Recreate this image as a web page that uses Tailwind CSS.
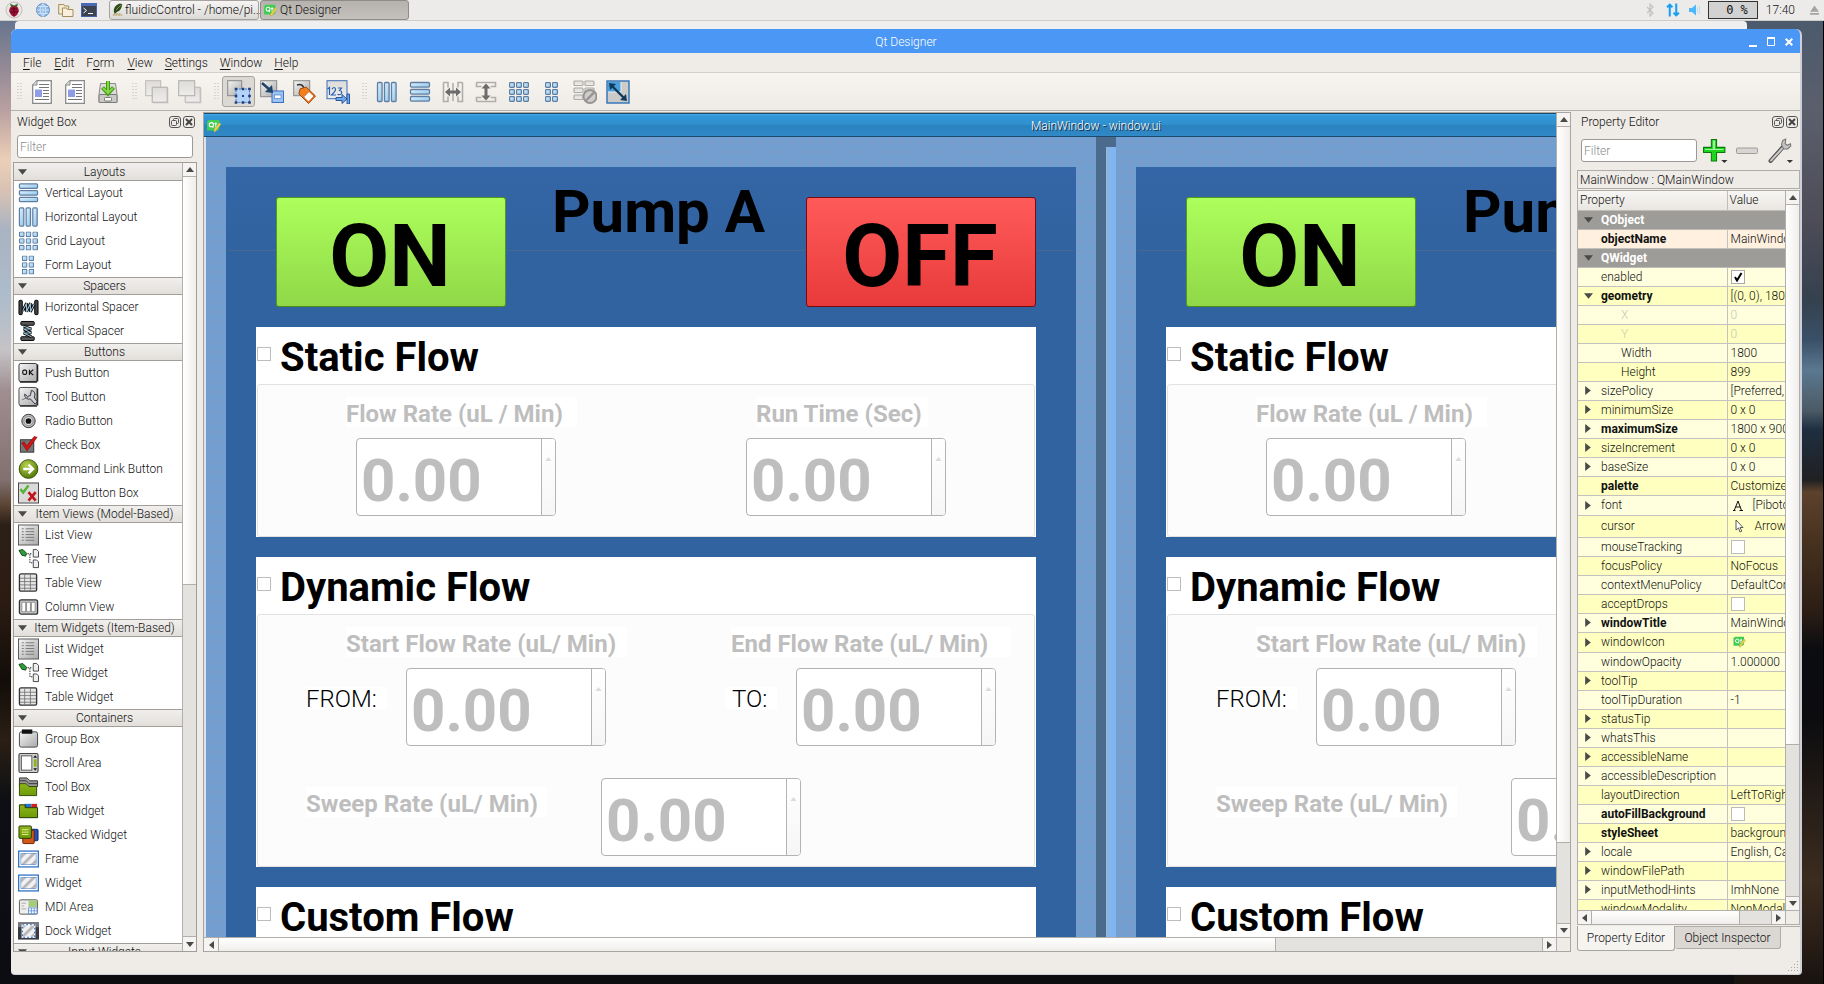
<!DOCTYPE html>
<html lang="en">
<head>
<meta charset="utf-8">
<title>Qt Designer</title>
<script src="https://cdn.jsdelivr.net/npm/@tailwindcss/browser@4"></script>
</head>
<body class="h-screen flex flex-col overflow-hidden relative bg-[#0d0d10] font-['Roboto',sans-serif] font-light text-[12px] leading-[16px] text-[#111]">

<!-- shared drawings -->
<svg class="absolute w-0 h-0" aria-hidden="true">
  <defs>
    <linearGradient id="gBlue" x1="0" y1="0" x2="1" y2="1"><stop offset="0" stop-color="#e4f4fd"/><stop offset="1" stop-color="#8cc4ea"/></linearGradient>
    <linearGradient id="gGray" x1="0" y1="0" x2="1" y2="1"><stop offset="0" stop-color="#f4f4f4"/><stop offset="1" stop-color="#a9a9a9"/></linearGradient>
    <linearGradient id="gLight" x1="0" y1="0" x2="0" y2="1"><stop offset="0" stop-color="#dedcd9"/><stop offset="1" stop-color="#efedeb"/></linearGradient>
    <linearGradient id="gGreen" x1="0" y1="0" x2="0" y2="1"><stop offset="0" stop-color="#8fb51a"/><stop offset="1" stop-color="#6c9a08"/></linearGradient>
    <radialGradient id="gBall" cx=".4" cy=".3" r=".7"><stop offset="0" stop-color="#b6d34a"/><stop offset="1" stop-color="#55790a"/></radialGradient>
    <pattern id="hatch" width="7" height="7" patternUnits="userSpaceOnUse" patternTransform="rotate(45)"><rect width="7" height="7" fill="#f1f1f1"/><rect width="3" height="7" fill="#b9b9b9"/></pattern>
  </defs>
  <symbol id="i-qt" viewBox="0 0 16 16"><path d="M2 1h12v10l-2 2H0V3z" fill="#41cd52"/><circle cx="5" cy="6.5" r="2.4" fill="none" stroke="#fff" stroke-width="1.3"/><path d="M5.5 8l2 2M10 4v5q0 1 1.5 1M8.5 5.5h3" stroke="#fff" stroke-width="1.2" fill="none"/><path d="M8 12l6-8 2 2-6 8-2 1z" fill="#ecd23c" stroke="#a89a70" stroke-width=".5"/></symbol>
  <symbol id="i-vl" viewBox="0 0 22 22"><g fill="url(#gBlue)" stroke="#5f7ea3" stroke-width="1.3"><rect x="1.5" y="1.5" width="19" height="4.6" rx="1"/><rect x="1.5" y="8.5" width="19" height="4.6" rx="1"/><rect x="1.5" y="15.5" width="19" height="4.6" rx="1"/></g></symbol>
  <symbol id="i-hl" viewBox="0 0 22 22"><g fill="url(#gBlue)" stroke="#5f7ea3" stroke-width="1.3"><rect x="1.5" y="1.5" width="4.6" height="19" rx="1"/><rect x="8.5" y="1.5" width="4.6" height="19" rx="1"/><rect x="15.5" y="1.5" width="4.6" height="19" rx="1"/></g></symbol>
  <symbol id="i-cell" viewBox="0 0 6 6"><rect x=".6" y=".6" width="4.8" height="4.8" rx=".8" fill="url(#gBlue)" stroke="#5f7ea3" stroke-width="1.2"/></symbol>
  <symbol id="i-grid" viewBox="0 0 22 22"><use href="#i-cell" x="1" y="1" width="6" height="6"/><use href="#i-cell" x="8" y="1" width="6" height="6"/><use href="#i-cell" x="15" y="1" width="6" height="6"/><use href="#i-cell" x="1" y="8" width="6" height="6"/><use href="#i-cell" x="8" y="8" width="6" height="6"/><use href="#i-cell" x="15" y="8" width="6" height="6"/><use href="#i-cell" x="1" y="15" width="6" height="6"/><use href="#i-cell" x="8" y="15" width="6" height="6"/><use href="#i-cell" x="15" y="15" width="6" height="6"/></symbol>
  <symbol id="i-form" viewBox="0 0 22 22"><use href="#i-cell" x="4" y="1" width="6" height="6"/><use href="#i-cell" x="11" y="1" width="6" height="6"/><use href="#i-cell" x="4" y="8" width="6" height="6"/><use href="#i-cell" x="11" y="8" width="6" height="6"/><use href="#i-cell" x="4" y="15" width="6" height="6"/><use href="#i-cell" x="11" y="15" width="6" height="6"/></symbol>
  <symbol id="i-hsp" viewBox="0 0 22 22"><rect x="1" y="4" width="3.5" height="15" rx="1" fill="#444" stroke="#000"/><rect x="17.500" y="4" width="3.5" height="15" rx="1" fill="#444" stroke="#000"/><path d="M5 15l4-8v9l4-9v9l4-8" stroke="#000" stroke-width="3" fill="none"/><path d="M5 15l4-8v9l4-9v9l4-8" stroke="#9cc0d4" stroke-width="1.2" fill="none"/></symbol>
  <symbol id="i-vsp" viewBox="0 0 22 22"><rect x="3" y="1" width="14" height="4" rx="1" fill="#555" stroke="#000"/><rect x="3" y="17" width="14" height="4" rx="1" fill="#555" stroke="#000"/><path d="M6 6l8 3H6l8 4H6l8 4" stroke="#000" stroke-width="3" fill="none"/><path d="M6 6l8 3H6l8 4H6l8 4" stroke="#9cc0d4" stroke-width="1.1" fill="none"/></symbol>
  <symbol id="i-push" viewBox="0 0 22 22"><rect x="1" y="1" width="19" height="19" rx="2" fill="url(#gGray)" stroke="#333"/><path d="M2 20.500h18M20.500 2v18" stroke="#222" stroke-width="1.5"/><rect x="5" y="8" width="4" height="4.500" rx="1.500" fill="none" stroke="#111" stroke-width="1.200"/><path d="M12 7.500v5.500M16 7.500l-3.500 3 3.500 2.500" fill="none" stroke="#111" stroke-width="1.200"/></symbol>
  <symbol id="i-tool" viewBox="0 0 22 22"><rect x="1" y="1" width="19" height="19" rx="2" fill="url(#gGray)" stroke="#444"/><path d="M2 20.500h18M20.500 2v18" stroke="#333" stroke-width="1.500"/><path d="M14 4a4.500 4.500 0 0 1 3 7l3 5-2 2.500-5-5.500a4.500 4.500 0 0 1-6-5l3 2.500 3-1z" fill="#cfd4da" stroke="#333" stroke-width="1"/><path d="M4 14l7-3" stroke="#777"/></symbol>
  <symbol id="i-radio" viewBox="0 0 22 22"><circle cx="11" cy="11" r="7" fill="#bbb" stroke="#333"/><circle cx="11" cy="11" r="4.800" fill="#ddd" stroke="#888"/><circle cx="11" cy="11" r="3" fill="#111"/></symbol>
  <symbol id="i-check" viewBox="0 0 22 22"><rect x="2.500" y="5.500" width="14" height="13" fill="#777" stroke="#333"/><path d="M4 9l2.500-1.500L9 12 17 2l3 1L9.500 17z" fill="#d41515" stroke="#700" stroke-width=".6"/></symbol>
  <symbol id="i-cmd" viewBox="0 0 22 22"><circle cx="11" cy="11" r="9.800" fill="url(#gBall)" stroke="#3c5206"/><path d="M5.500 11h9M11 6.500l4.800 4.500-4.800 4.500" fill="none" stroke="#fff" stroke-width="2.400"/></symbol>
  <symbol id="i-dlg" viewBox="0 0 22 22"><rect x=".5" y=".5" width="21" height="21" fill="#dadada" stroke="#444"/><path d="M2.500 7l3 3.500L11 3" fill="none" stroke="#54b333" stroke-width="2.600"/><path d="M11 10l7.500 9M18.500 10L11 19" stroke="#c0171c" stroke-width="2.800"/></symbol>
  <symbol id="i-list" viewBox="0 0 22 22"><rect x=".5" y=".5" width="21" height="21" fill="url(#gGray)" stroke="#555"/><path d="M4 4.500h2M4 7.500h2M4 10.500h2M4 13.500h2M4 16.500h2M8 4.500h9M8 7.500h9M8 10.500h9M8 13.500h9M8 16.500h9" stroke="#777"/></symbol>
  <symbol id="i-tree" viewBox="0 0 22 22"><path d="M1 2l4-1 4 4-1 3-4-1z" fill="#2f9a3a" stroke="#124a18"/><path d="M10 5.500h5M12.500 6v9h3" fill="none" stroke="#222" stroke-dasharray="1.500 1"/><path d="M16 1h3.500l2 2v6H16zM16 12h3.500l2 2v6H16z" fill="#eee" stroke="#444"/></symbol>
  <symbol id="i-table" viewBox="0 0 22 22"><rect x="1.500" y="1.500" width="18" height="18" rx="1.500" fill="#e6e6e6" stroke="#333" stroke-width="1.400"/><path d="M2 6h17M2 9.500h17M2 13h17M2 16.500h17M7 2v17M13 2v17" stroke="#666" stroke-width=".8"/></symbol>
  <symbol id="i-col" viewBox="0 0 22 22"><rect x="1.500" y="3.500" width="19" height="15" rx="2" fill="#ccc" stroke="#333" stroke-width="1.400"/><path d="M4 6h4v10H4zM9 6h4v10H9zM14 6h4v10h-4z" fill="#fff" stroke="#777" stroke-width=".8"/></symbol>
  <symbol id="i-group" viewBox="0 0 22 22"><rect x="1.500" y="3.500" width="19" height="16" rx="2" fill="url(#gGray)" stroke="#444"/><rect x="4" y="1" width="11" height="4.500" fill="#111"/></symbol>
  <symbol id="i-scroll" viewBox="0 0 22 22"><rect x="1" y="1" width="20" height="20" rx="1.500" fill="#d0d0d0" stroke="#444" stroke-width="1.200"/><rect x="3.500" y="3.500" width="11" height="15" fill="#fff" stroke="#555"/><rect x="16.500" y="7" width="3" height="8" fill="#8db51a"/><path d="M16 5.500l2-2.500 2 2.500zM16 16.500l2 2.500 2-2.500z" fill="#111"/></symbol>
  <symbol id="i-toolbox" viewBox="0 0 22 22"><path d="M1.500 1.500h8l3 3h8v6h-19z" fill="#999" stroke="#333"/><path d="M1.500 4.500h7l3 3h9" fill="none" stroke="#333"/><path d="M1.500 7.500h7l3 3h8v9.500h-18z" fill="url(#gGreen)" stroke="#33480a"/></symbol>
  <symbol id="i-tab" viewBox="0 0 22 22"><rect x="7" y="3.500" width="7" height="4" fill="#1d73d0"/><rect x="14" y="3.500" width="6" height="4" fill="#d02020"/><path d="M1.500 4.500h6v3h13v10.500h-19z" fill="url(#gGreen)" stroke="#222f05"/></symbol>
  <symbol id="i-stack" viewBox="0 0 22 22"><rect x="9" y="5" width="12" height="12" rx="1" fill="#2152b8" stroke="#102a66"/><rect x="5" y="6" width="12" height="14" rx="1" fill="#d0561a" stroke="#662505"/><rect x="1" y="1.500" width="13" height="13" rx="1" fill="url(#gGreen)" stroke="#26380a"/><path d="M4 5.500h7M4 8h7M4 10.500h7" stroke="#e6f08a"/></symbol>
  <symbol id="i-frame" viewBox="0 0 22 22"><rect x=".7" y="2.700" width="20.600" height="16.600" fill="#fff" stroke="#2a6cc4" stroke-width="1.300"/><rect x="3" y="5" width="16" height="12" fill="url(#hatch)" stroke="#2a6cc4" stroke-width=".5"/></symbol>
  <symbol id="i-mdi" viewBox="0 0 22 22"><rect x="1.500" y="3.500" width="19" height="15" rx="1.500" fill="#eee" stroke="#555"/><rect x="11" y="4" width="9" height="7" fill="#a5cc7c"/><rect x="11" y="12" width="9" height="6" fill="#fff" stroke="#6b97d8"/><path d="M11 15h9M14 12v6M17 12v6" stroke="#6b97d8"/><path d="M3.500 7h5M3.500 10h3M3.500 13h5" stroke="#aaa"/></symbol>
  <symbol id="i-dock" viewBox="0 0 22 22"><rect y="2" width="22" height="18" fill="#3a3a40"/><rect y="2" width="22" height="5" fill="#77777d"/><rect x="4.500" y="4.500" width="13" height="13" fill="url(#hatch)" stroke="#fff" stroke-width="1.500"/><rect x="4.500" y="4.500" width="13" height="13" fill="none" stroke="#2a6cc4" stroke-width="1.200" stroke-dasharray="2 2"/></symbol>
  <symbol id="i-float" viewBox="0 0 12 12"><rect x=".5" y=".5" width="11" height="11" rx="2.500" fill="none" stroke="#555"/><rect x="4.500" y="2.500" width="5" height="5" rx="1" fill="none" stroke="#555"/><rect x="2.500" y="4.500" width="5" height="5" rx="1" fill="#efebe7" stroke="#555"/></symbol>
  <symbol id="i-close" viewBox="0 0 12 12"><rect x=".5" y=".5" width="11" height="11" rx="2.500" fill="none" stroke="#555"/><path d="M3 3l6 6M9 3l-6 6" stroke="#444" stroke-width="2"/></symbol>
  <symbol id="i-doc" viewBox="0 0 24 24"><path d="M7 .7h14.300v22.600H2.700V5z" fill="#fff" stroke="#8a8a8a" stroke-width="1.300"/><path d="M7 .7V5H2.700" fill="#ddd" stroke="#8a8a8a"/><path d="M9 4.500h10M9 7.500h10M13 10.500h6M13 13.500h6M13 16.500h6M5 19.500h14" stroke="#777"/><rect x="5" y="9.500" width="7" height="7.500" fill="#8f9ce8"/></symbol>
  <symbol id="i-save" viewBox="0 0 24 24"><path d="M4.500 3.500h15l1.500 11v8H3v-8z" fill="#dcdcda" stroke="#8a8a88"/><rect x="3" y="14.500" width="18" height="8" rx="1" fill="#c9c9c7" stroke="#7a7a78"/><rect x="8.500" y="17.500" width="7" height="3.500" rx="1" fill="#fff" stroke="#777"/><path d="M12 1v11M6.500 7.500l5.500 6 5.500-6" fill="none" stroke="#3f9a10" stroke-width="4"/><path d="M12 1v11M7 8l5 5 5-5" fill="none" stroke="#86d44a" stroke-width="2"/></symbol>
  <symbol id="i-back" viewBox="0 0 24 24"><rect x="8" y="8" width="15.500" height="15.500" fill="#bbb" opacity=".5"/><rect x=".7" y=".7" width="15" height="15" fill="url(#gLight)" stroke="#bdbab6"/><rect x="7.200" y="7.200" width="15" height="15" fill="url(#gLight)" stroke="#b0ada9"/></symbol>
  <symbol id="i-front" viewBox="0 0 24 24"><rect x="8" y="8" width="15.500" height="15.500" fill="#bbb" opacity=".5"/><rect x="7.200" y="7.200" width="15" height="15" fill="url(#gLight)" stroke="#b9b6b2"/><rect x=".7" y=".7" width="16" height="15" fill="url(#gLight)" stroke="#b0ada9"/></symbol>
  <symbol id="i-ew" viewBox="0 0 24 24"><rect x=".7" y=".7" width="14" height="15" fill="url(#gGray)" stroke="#888"/><rect x="9" y="9" width="13.500" height="13.500" fill="#b4d3fa" stroke="#4a78c8" stroke-dasharray="2 1"/><path d="M7.700 7.700h2.600v2.600H7.700zM14.700 7.700h2.600v2.600h-2.600zM21.200 7.700h2.600v2.600h-2.600zM7.700 14.700h2.600v2.600H7.700zM21.200 14.700h2.600v2.600h-2.600zM7.700 21.200h2.600v2.600H7.700zM14.700 21.200h2.600v2.600h-2.600zM21.200 21.200h2.600v2.600h-2.600z" fill="#1f3f78"/><rect x="15" y="15" width="2" height="2" fill="#1f3f78"/></symbol>
  <symbol id="i-sig" viewBox="0 0 24 24"><rect x=".7" y=".7" width="16" height="16" fill="url(#gGray)" stroke="#888"/><rect x="12" y="11" width="11.500" height="11.500" fill="#9cc3f5" stroke="#3b70be"/><rect x="14.500" y="15" width="6.500" height="3.500" fill="#fff" stroke="#3b70be" stroke-width=".6"/><path d="M2 3l8 7" stroke="#1c4368" stroke-width="2.500"/><path d="M13 13l-8-1 7-7z" fill="#1c4368"/></symbol>
  <symbol id="i-bud" viewBox="0 0 24 24"><rect x=".7" y=".7" width="16" height="15" fill="url(#gGray)" stroke="#888"/><path d="M4 5q6-2 7 4" fill="none" stroke="#333" stroke-width="1.500"/><path d="M7 9l6-2 9.500 9-7 7.500L6 14z" fill="#f08020" stroke="#a04a08"/><path d="M16 11.500l5 4.500-5.500 6-5-5z" fill="#fff" stroke="#e06010"/></symbol>
  <symbol id="i-taborder" viewBox="0 0 24 24"><rect x="1" y=".7" width="20" height="18" fill="url(#gLight)" stroke="#3b6db5"/><path d="M1.500 9l2-1.500V15M6 9q2.500-3 3.500 0 .3 2-4 6h4.500M12 8h3.500l-2 2.500q3 .5 2 3-1.500 2-4 .8" fill="none" stroke="#2a62b0" stroke-width="1.200"/><path d="M10 17.500h6v-3l5 4.500-5 4.500v-3h-6zM21 14h2.500v10H21z" fill="#6fa8e8" stroke="#1d4a96" stroke-width=".9"/></symbol>
  <symbol id="i-hsplit" viewBox="0 0 22 22"><path d="M1.500 1.500H6v5M1.500 1.500v19H6v-5M20.500 1.500H16v5M20.500 1.500v19H16v-5M11 2v18" fill="none" stroke="#b0aeab" stroke-width="1.600"/><path d="M3 11l5-4.500V9.500h6V6.500l5 4.500-5 4.500v-3H8v3z" fill="#6c6c6c"/></symbol>
  <symbol id="i-vsplit" viewBox="0 0 22 22"><path d="M1.500 1.500v4h5M1.500 1.500h19v4h-5M1.500 20.500v-4h5M1.500 20.500h19v-4h-5" fill="none" stroke="#b0aeab" stroke-width="1.600"/><path d="M11 2.500l4.500 5h-3v7h3L11 19.500l-4.500-5h3v-7h-3z" fill="#6c6c6c"/></symbol>
  <symbol id="i-break" viewBox="0 0 24 24"><g fill="url(#gLight)" stroke="#aeaba8" stroke-width="1.200"><rect x="1" y="1" width="9" height="4.500" rx="1"/><rect x="12" y="1" width="9" height="4.500" rx="1"/><rect x="1" y="8" width="9" height="4.500" rx="1"/><rect x="1" y="15" width="9" height="4.500" rx="1"/><rect x="12" y="8" width="9" height="4.500" rx="1"/></g><circle cx="17" cy="16.500" r="6.500" fill="#cfcdcb" stroke="#969492" stroke-width="2"/><path d="M12.500 21l9-9" stroke="#969492" stroke-width="2.400"/></symbol>
  <symbol id="i-adjust" viewBox="0 0 24 24"><rect x="1" y="1" width="22" height="22" fill="#cdcbc8" stroke="#2d6fb8" stroke-width="1.400"/><path d="M2 2h13v10H2z" fill="#4aa0dc"/><path d="M15 2v10H2" stroke="#eee" fill="none"/><path d="M6 6l12 12" stroke="#123a5c" stroke-width="2.400"/><path d="M3 3l7 1-6 6zM21 21l-7-1 6-6z" fill="#123a5c"/></symbol>
  <symbol id="i-up" viewBox="0 0 8 5"><path d="M0 5l4-5 4 5z" fill="#4a4a48"/></symbol>
  <symbol id="i-down" viewBox="0 0 8 5"><path d="M0 0l4 5 4-5z" fill="#4a4a48"/></symbol>
  <symbol id="i-left" viewBox="0 0 5 8"><path d="M5 0L0 4l5 4z" fill="#4a4a48"/></symbol>
  <symbol id="i-right" viewBox="0 0 5 8"><path d="M0 0l5 4-5 4z" fill="#4a4a48"/></symbol>
</svg>

<!-- desktop picture, seen at the window's edges -->
<div class="absolute inset-0 -z-10 flex justify-between" aria-hidden="true">
  <div class="w-[40px] bg-[linear-gradient(to_bottom,#65748e_20px,#8c8694_60px,#b9a0a0_110px,#eccfb8_160px,#d9c2b4_190px,#a9b3c2_230px,#aebccb_300px,#c5c3c6_350px,#a08f92_390px,#80706f_480px,#5a4434_505px,#2c1f16_525px,#2b1c12_600px,#120d0a_680px,#2b1f14_740px,#0d0f14_800px,#0c0d12_984px)]"></div>
  <div class="w-[90px] border-r border-black bg-[linear-gradient(to_bottom,#4b5a6c_20px,#5b5f6c_110px,#4d4c58_220px,#35414e_300px,#3a5068_340px,#5a7890_370px,#4c5b66_410px,#1e2e40_430px,#202022_480px,#5d422d_492px,#47321f_540px,#2c1e15_610px,#0b0c10_650px,#0c0c0f_720px,#2a2018_820px,#3c2c20_880px,#2a1e16_940px,#17120f_984px)]"></div>
</div>

<!-- system panel -->
<header class="h-[21px] shrink-0 flex items-center bg-[#edebe9] border-b border-[#cfcdc9] whitespace-nowrap">
  <svg class="ml-[5px] w-[18px] h-[18px]" viewBox="0 0 18 18"><circle cx="9" cy="9" r="8" fill="#e9e7e5" stroke="#c4c0bc"/><path d="M5 2.500l4 2 4-2-1 3.500H6z" fill="#3e6b2c"/><path d="M5 6.500l4-1.500 4 1.500 1 3.500-2 4-3 2-3-2-2-4z" fill="#a01238"/><path d="M6 8h6M5 11h8M9 6v9" stroke="#4a0618" stroke-width=".8"/></svg>
  <svg class="ml-[13px] w-[14px] h-[14px]" viewBox="0 0 14 14"><circle cx="7" cy="7" r="6.500" fill="#8fb9e6" stroke="#5f8ec4"/><path d="M7 .5v13M.5 7h13M2 3.500h10M2 10.500h10M7 .5q-6 6.500 0 13 6-6.500 0-13" fill="none" stroke="#d8e8f8" stroke-width=".8"/></svg>
  <svg class="ml-[8px] w-[16px] h-[16px]" viewBox="0 0 16 16"><path d="M.7 2.500h5l1 1.500h4v8h-10z" fill="#f3ead2" stroke="#a58e5c"/><path d="M4.500 6h4l1 1.500h5.500v7h-10.500z" fill="#f8f0dc" stroke="#a58e5c"/></svg>
  <svg class="ml-[7px] w-[16px] h-[14px]" viewBox="0 0 16 14"><rect x=".5" y=".5" width="15" height="13" fill="#3c4350" stroke="#4664a8"/><rect width="16" height="3" fill="#4a6ab8"/><path d="M2.500 5l3 2.500-3 2.500" fill="none" stroke="#fff"/><path d="M7 10.500h5" stroke="#fff"/></svg>
  <nav class="flex ml-[12px] gap-px" aria-label="Open windows">
    <button class="h-[20px] w-[150px] px-[2px] flex items-center gap-px rounded-[3px] border border-[#a5a29e] bg-linear-to-b from-[#f6f5f3] to-[#dcdad7]"><svg class="w-[12px] h-[16px] shrink-0" viewBox="0 0 14 16"><path d="M2 9q0-6 7-8.500l3 .5q-1 8-6 9l-3 3z" fill="#2c4a1a"/><path d="M5 8q3-4 6-6" stroke="#8fa860" fill="none"/><path d="M1 14h11M2 12.500h9" stroke="#b9a66c" stroke-width="1.400" stroke-dasharray="2 1"/></svg><span>fluidicControl - /home/pi...</span></button>
    <button class="h-[20px] w-[149px] px-[3px] flex items-center gap-[3px] rounded-[3px] border border-[#8f8c88] bg-linear-to-b from-[#b5b2ae] to-[#c4c1bd]"><svg class="w-[13px] h-[13px] shrink-0"><use href="#i-qt"/></svg><span>Qt Designer</span></button>
  </nav>
  <div class="ml-auto flex items-center pr-[5px]">
    <svg class="w-[8px] h-[14px]" viewBox="0 0 8 14"><path d="M1 4l6 6-3 3V1l3 3-6 6" fill="none" stroke="#c2c2c4" stroke-width="1.200"/></svg>
    <svg class="ml-[12px] w-[14px] h-[14px]" viewBox="0 0 12 13"><path d="M3 12.500V2M.5 4L3 1.500 5.500 4M9 .5V11M6.500 9L9 11.500 11.500 9" fill="none" stroke="#17a0f4" stroke-width="1.900"/></svg>
    <svg class="ml-[9px] w-[12px] h-[12px]" viewBox="0 0 12 12"><path d="M0 4h3l4-3.500v11L3 8H0z" fill="#4cb8fa"/><path d="M8.500 3.500v5M10.500 2v8" stroke="#b8dcf2"/></svg>
    <div class="ml-[7px] w-[50px] h-[18px] border border-[#333] bg-[#d2d2d2] pr-[9px] text-right leading-[17px] font-normal whitespace-pre font-['DejaVu_Sans_Mono',monospace]">0 %</div>
    <time class="ml-[8px]">17:40</time>
    <svg class="ml-[15px] w-[9px] h-[10px]" viewBox="0 0 8 9"><path d="M0 6l4-5.500L8 6zM0 7.200h8v1.600H0z" fill="#a4a4a4"/></svg>
  </div>
</header>

<!-- window lying behind -->
<div class="absolute left-[15px] right-[77px] top-[21px] h-[20px] rounded-t-[4px] bg-[#efefef]"></div>

<!-- Qt Designer window -->
<div class="relative z-10 flex-1 min-h-0 mt-[8px] mb-[9px] ml-[11px] mr-[22px] flex flex-col rounded-t-[6px] rounded-b-[4px] overflow-hidden bg-[#efebe7] border-r-2 border-b border-[#cdd0d8]">
  <div class="h-[24px] shrink-0 bg-[#4b97f5] flex items-center pt-px text-white -mr-[2px] pr-[4px]">
    <h1 class="flex-1 text-center pl-[3px]">Qt Designer</h1>
    <button aria-label="Minimize" class="w-[18px] h-[16px] -ml-[54px]"><svg class="w-[8px] h-[8px] mx-auto mt-[2px]" viewBox="0 0 8 8"><path d="M0 7h8" stroke="#fff" stroke-width="2"/></svg></button>
    <button aria-label="Maximize" class="w-[18px] h-[16px]"><svg class="w-[8px] h-[9px] mx-auto" viewBox="0 0 8 9"><path d="M.5 1h7v7.500h-7z" fill="none" stroke="#fff"/><path d="M0 1h8" stroke="#fff" stroke-width="2"/></svg></button>
    <button aria-label="Close" class="w-[18px] h-[16px]"><svg class="w-[8px] h-[8px] mx-auto" viewBox="0 0 8 8"><path d="M.7.7l6.600 6.600M7.300.7L.7 7.300" stroke="#fff" stroke-width="2"/></svg></button>
  </div>

  <nav class="h-[20px] shrink-0 flex items-center pl-[6px] border-b border-[#d3cfca]" aria-label="Menu bar">
    <button class="px-[6px]"><u class="underline-offset-2">F</u>ile</button>
    <button class="px-[6px] ml-px"><u class="underline-offset-2">E</u>dit</button>
    <button class="px-[6px]">F<u class="underline-offset-2">o</u>rm</button>
    <button class="px-[6px] ml-px"><u class="underline-offset-2">V</u>iew</button>
    <button class="px-[6px]"><u class="underline-offset-2">S</u>ettings</button>
    <button class="px-[6px]"><u class="underline-offset-2">W</u>indow</button>
    <button class="px-[6px]"><u class="underline-offset-2">H</u>elp</button>
  </nav>

  <div id="toolbar" role="toolbar" aria-label="Tools" class="h-[38px] shrink-0 flex items-center pl-[6px] border-b border-[#b5b1ac] bg-linear-to-b from-[#f8f5f1] to-[#eeeae6]"></div>

  <div class="flex-1 min-h-0 flex pl-px">
    <!-- widget box -->
    <section class="w-[191px] shrink-0 flex flex-col pb-[22px] pr-[6px]">
      <div class="h-[21px] flex items-center pl-[5px] pr-[2px] gap-[2px]">
        <h2 class="mr-auto">Widget Box</h2>
        <button aria-label="Float widget box"><svg class="w-[12px] h-[12px] block"><use href="#i-float"/></svg></button>
        <button aria-label="Close widget box"><svg class="w-[12px] h-[12px] block"><use href="#i-close"/></svg></button>
      </div>
      <input aria-label="Filter widgets" placeholder="Filter" class="mt-[3px] ml-[5px] mr-[4px] h-[23px] shrink-0 rounded-[3px] border border-[#9d9a96] bg-white px-[2px] placeholder:text-[#8c8c8c]">
      <div class="mt-[4px] ml-[1px] flex-1 min-h-0 flex border border-[#a19e9a] bg-white">
        <div id="widgets" class="flex-1 min-w-0 overflow-hidden"></div>
        <div class="w-[14px] shrink-0 flex flex-col border-l border-[#b2afab] bg-[#e4e2df]">
          <button aria-label="Scroll up" class="h-[14px] shrink-0 grid place-items-center bg-[#f6f4f2] border-b border-[#b2afab]"><svg class="w-[8px] h-[5px]"><use href="#i-up"/></svg></button>
          <div class="grow-[408] basis-0 bg-linear-to-r from-white to-[#f0eeeb] border-b border-[#b2afab]"></div>
          <div class="grow-[352] basis-0"></div>
          <button aria-label="Scroll down" class="h-[15px] shrink-0 grid place-items-center bg-[#f6f4f2] border-t border-[#b2afab]"><svg class="w-[8px] h-[5px]"><use href="#i-down"/></svg></button>
        </div>
      </div>
    </section>

    <!-- form canvas -->
    <main class="flex-1 min-w-0 flex flex-col mt-px mb-[22px] border border-[#a9a6a2] bg-[#efebe7]">
      <div class="flex-1 min-h-0 flex">
        <div class="flex-1 min-w-0 overflow-hidden flex flex-col">
          <div class="w-[1784px] h-[24px] shrink-0 flex items-center pt-px pl-[3px] border-t border-b border-[#1b4a6c] bg-[linear-gradient(to_bottom,#46a8e6,#3196d8_10%,#2f8fcc_48%,#2a82bf_52%,#3089c6)] text-white">
            <svg class="w-[14px] h-[14px]"><use href="#i-qt"/></svg>
            <h2 class="flex-1 text-center pr-[17px] [text-shadow:1px_1px_0_#123]">MainWindow - window.ui</h2>
          </div>
          <div class="flex-1 min-h-0 flex items-start w-[1784px] border-l-2 border-[#dfe3e8] bg-[#739ed0] bg-[radial-gradient(circle,#8d98b8_1px,transparent_1px)] bg-size-[10px_10px]" id="canvas"></div>
        </div>
        <div class="w-[14px] shrink-0 flex flex-col border-l border-[#b2afab] bg-[#e4e2df]">
          <button aria-label="Scroll form up" class="h-[14px] shrink-0 grid place-items-center bg-[#f6f4f2] border-b border-[#b2afab]"><svg class="w-[8px] h-[5px]"><use href="#i-up"/></svg></button>
          <div class="grow-[717] basis-0 bg-linear-to-r from-white to-[#f0eeeb] border-b border-[#b2afab]"></div>
          <div class="grow-[80] basis-0"></div>
          <button aria-label="Scroll form down" class="h-[14px] shrink-0 grid place-items-center bg-[#f6f4f2] border-t border-[#b2afab]"><svg class="w-[8px] h-[5px]"><use href="#i-down"/></svg></button>
        </div>
      </div>
      <div class="h-[14px] shrink-0 flex border-t border-[#b2afab] bg-[#e4e2df]">
        <button aria-label="Scroll form left" class="w-[15px] grid place-items-center bg-[#f6f4f2] border-r border-[#b2afab]"><svg class="w-[5px] h-[8px]"><use href="#i-left"/></svg></button>
        <div class="grow-[1058] basis-0 bg-linear-to-b from-white to-[#f0eeeb] border-r border-[#b2afab]"></div>
        <div class="grow-[266] basis-0"></div>
        <button aria-label="Scroll form right" class="w-[14px] grid place-items-center bg-[#f6f4f2] border-l border-[#b2afab]"><svg class="w-[5px] h-[8px]"><use href="#i-right"/></svg></button>
        <div class="w-[14px] bg-[#efebe7] border-l border-[#b2afab]"></div>
      </div>
    </main>

    <!-- property editor -->
    <section class="w-[229px] shrink-0 flex flex-col pl-[6px]">
      <div class="h-[21px] flex items-center pl-[4px] pr-[2px] gap-[2px]">
        <h2 class="mr-auto">Property Editor</h2>
        <button aria-label="Float property editor"><svg class="w-[12px] h-[12px] block"><use href="#i-float"/></svg></button>
        <button aria-label="Close property editor"><svg class="w-[12px] h-[12px] block"><use href="#i-close"/></svg></button>
      </div>
      <div class="mt-[7px] pl-[4px] flex items-center h-[23px]">
        <input aria-label="Filter properties" placeholder="Filter" class="w-[116px] h-[23px] rounded-[3px] border border-[#9d9a96] bg-white px-[2px] placeholder:text-[#8c8c8c]">
        <button aria-label="Add property" class="ml-[5px]"><svg class="w-[26px] h-[25px] block" viewBox="0 0 24 24"><path d="M8.500 1.500h5v7.500h8v5h-8v8h-5v-8H1V9h7.500z" fill="#1fd41f" stroke="#0a7a0a"/><path d="M10 2.500h2v8h8v1H2.500v-1H10z" fill="#9cf59c"/><path d="M18 21h6l-3 3z" fill="#333"/></svg></button>
        <button aria-label="Remove property" class="ml-[8px]"><svg class="w-[22px] h-[8px] block" viewBox="0 0 22 8"><rect x=".5" y="1" width="21" height="5.500" rx="1" fill="#d7d5d3" stroke="#9f9c99"/></svg></button>
        <button aria-label="Configure" class="ml-[10px]"><svg class="w-[25px] h-[25px] block" viewBox="0 0 24 24"><path d="M2.500 22L14 9" stroke="#555" stroke-width="4" stroke-linecap="round"/><path d="M3 21.500L14 9.500" stroke="#c9c9c9" stroke-width="2" stroke-linecap="round"/><path d="M17 1l-3 1.500-1 4 2 4h4l3-3-.5-2-3 1.500-2-1.500z" fill="#c4c4c4" stroke="#777"/><path d="M18 21h6l-3 3z" fill="#333"/></svg></button>
      </div>
      <div class="mt-[8px] h-[19px] shrink-0 border border-[#b0ada9] px-[2px] leading-[18px]">MainWindow : QMainWindow</div>
      <div class="mt-px h-[735px] min-h-0 flex flex-col border border-[#b0ada9]">
        <div class="flex-1 min-h-0 flex">
          <div class="flex-1 min-w-0 overflow-hidden bg-white">
            <table class="w-full table-fixed border-collapse whitespace-nowrap">
              <colgroup><col class="w-[149px]"><col></colgroup>
              <thead><tr class="h-[19px] bg-linear-to-b from-[#f8f6f4] to-[#e9e6e2] text-left"><th class="font-light pl-[2px] border-r border-b border-[#c0bdb9]">Property</th><th class="font-light pl-[2px] border-b border-[#c0bdb9]">Value</th></tr></thead>
              <tbody id="props"></tbody>
            </table>
          </div>
          <div class="w-[14px] shrink-0 flex flex-col border-l border-[#b2afab] bg-[#e4e2df]">
            <button aria-label="Scroll properties up" class="h-[14px] shrink-0 grid place-items-center bg-[#f6f4f2] border-b border-[#b2afab]"><svg class="w-[8px] h-[5px]"><use href="#i-up"/></svg></button>
            <div class="grow-[541] basis-0 bg-linear-to-r from-white to-[#f0eeeb] border-b border-[#b2afab]"></div>
            <div class="grow-[151] basis-0"></div>
            <button aria-label="Scroll properties down" class="h-[14px] shrink-0 grid place-items-center bg-[#f6f4f2] border-t border-[#b2afab]"><svg class="w-[8px] h-[5px]"><use href="#i-down"/></svg></button>
          </div>
        </div>
        <div class="h-[14px] shrink-0 flex border-t border-[#b2afab] bg-[#e4e2df]">
          <button aria-label="Scroll properties left" class="w-[14px] grid place-items-center bg-[#f6f4f2] border-r border-[#b2afab]"><svg class="w-[5px] h-[8px]"><use href="#i-left"/></svg></button>
          <div class="grow-[149] basis-0 bg-linear-to-b from-white to-[#f0eeeb] border-r border-[#b2afab]"></div>
          <div class="grow-[31] basis-0"></div>
          <button aria-label="Scroll properties right" class="w-[14px] grid place-items-center bg-[#f6f4f2] border-l border-[#b2afab]"><svg class="w-[5px] h-[8px]"><use href="#i-right"/></svg></button>
          <div class="w-[14px] bg-[#efebe7] border-l border-[#b2afab]"></div>
        </div>
      </div>
      <div role="tablist" class="mt-px flex items-start border-t border-[#b0ada9]">
        <button role="tab" aria-selected="true" class="w-[98px] h-[25px] -mt-px rounded-b-[3px] border border-t-0 border-[#a9a6a2] bg-[#f6f4f1]">Property Editor</button>
        <button role="tab" aria-selected="false" class="w-[106px] h-[22px] rounded-b-[3px] border border-l-0 border-t-0 border-[#b0ada9] bg-[#dbd7d2]">Object Inspector</button>
      </div>
      <svg class="mt-auto mb-[2px] ml-auto mr-px w-[12px] h-[12px]" viewBox="0 0 12 12"><path d="M10 1.500h1M7 4.500h1M10 4.500h1M4 7.500h1M7 7.500h1M10 7.500h1M1 10.500h1M4 10.500h1M7 10.500h1M10 10.500h1" stroke="#a9a6a2"/></svg>
    </section>
  </div>
</div>

<!-- one pump's page of the form; the script adds it twice -->
<template id="pump">
  <section class="relative w-[850px] h-[900px] shrink-0 mt-[30px] ml-[20px] pl-[30px] bg-linear-to-b from-[#3465a6] to-[#3163a0] to-[83px]">
    <div class="absolute left-[2px] right-[2px] top-[83px] h-px bg-[#49688f]"></div>
    <div class="relative h-[160px] pt-[30px] pl-[20px] pr-[40px] flex items-start">
      <button class="w-[230px] h-[110px] pt-[8px] pr-[2px] rounded-[3px] border border-[#549a1c] border-b-[#4c8e18] bg-linear-to-b from-[#adff5c] to-[#90d848] text-[87px] leading-[100px] font-bold text-black">ON</button>
      <h3 class="flex-1 -mt-[21px] pl-[5px] text-center text-[60px] leading-[72px] font-bold text-black whitespace-nowrap">Pump A</h3>
      <button class="w-[230px] h-[110px] pt-[8px] pr-[2px] rounded-[3px] border border-[#7c0a0a] bg-linear-to-b from-[#ff5a5a] to-[#e83a3a] text-[87px] leading-[100px] font-bold text-black">OFF</button>
    </div>
    <fieldset class="w-[780px] h-[210px] bg-white flex flex-col">
      <label class="h-[57px] shrink-0 pl-px pt-[4px] flex items-center gap-[9px] text-[40px] leading-[52px] font-bold text-black"><input type="checkbox" class="appearance-none w-[14px] h-[14px] -mt-[8px] border border-[#bdbdbd] bg-white">Static Flow</label>
      <div class="flex-1 mx-px flex pt-[12px] pl-[88px] rounded-[3px] border border-[#e2e2e2] bg-[#fcfcfc] text-[24px] leading-[34px] font-bold text-[#bebebe]">
        <div class="w-[400px] flex flex-col items-start gap-[11px]">
          <label data-for="rate" class="h-[30px] w-[231px] bg-white">Flow Rate (uL / Min)</label>
          <span data-spin="rate" class="ml-[10px]"></span>
        </div>
        <div class="flex flex-col items-start gap-[11px]">
          <label data-for="time" class="ml-[10px] h-[30px] w-[172px] bg-white">Run Time (Sec)</label>
          <span data-spin="time"></span>
        </div>
      </div>
    </fieldset>
    <fieldset class="mt-[20px] w-[780px] h-[310px] bg-white flex flex-col">
      <label class="h-[57px] shrink-0 pl-px pt-[4px] flex items-center gap-[9px] text-[40px] leading-[52px] font-bold text-black"><input type="checkbox" class="appearance-none w-[14px] h-[14px] -mt-[8px] border border-[#bdbdbd] bg-white">Dynamic Flow</label>
      <div class="flex-1 mx-px pt-[12px] pl-[48px] rounded-[3px] border border-[#e2e2e2] bg-[#fcfcfc] text-[24px] leading-[34px] font-bold text-[#bebebe]">
        <div class="flex pl-[40px] gap-[104px]">
          <label data-for="start" class="h-[30px] w-[281px] bg-white">Start Flow Rate (uL/ Min)</label>
          <label data-for="end" class="h-[30px] w-[280px] bg-white">End Flow Rate (uL/ Min)</label>
        </div>
        <div class="mt-[11px] flex items-start">
          <span class="mt-[19px] w-[81px] h-[22px] bg-white leading-[24px] font-light text-black">FROM:</span>
          <span data-spin="start" class="ml-[19px]"></span>
          <span class="mt-[19px] ml-[120px] pl-[6px] w-[51px] h-[22px] bg-white leading-[24px] font-light text-black">TO:</span>
          <span data-spin="end" class="ml-[19px]"></span>
        </div>
        <div class="mt-[32px] flex items-start">
          <label data-for="sweep" class="mt-[9px] w-[241px] h-[30px] bg-white">Sweep Rate (uL/ Min)</label>
          <span data-spin="sweep" class="ml-[54px]"></span>
        </div>
      </div>
    </fieldset>
    <fieldset class="mt-[20px] w-[780px] h-[180px] bg-white">
      <label class="h-[57px] pl-px pt-[4px] flex items-center gap-[9px] text-[40px] leading-[52px] font-bold text-black"><input type="checkbox" class="appearance-none w-[14px] h-[14px] -mt-[8px] border border-[#bdbdbd] bg-white">Custom Flow</label>
    </fieldset>
  </section>
</template>

<script>
const byId = id => document.getElementById(id);

// toolbar: 'grip' or [icon, label, icon size class]
const S = 'w-[24px] h-[24px]', M = 'w-[22px] h-[22px]';
byId('toolbar').innerHTML = [
  'grip', ['doc', 'New', S], ['doc', 'Open', S], ['save', 'Save', S],
  'grip', ['back', 'Send to Back', S], ['front', 'Bring to Front', S],
  'grip', ['ew', 'Edit Widgets', S, true], ['sig', 'Edit Signals/Slots', S], ['bud', 'Edit Buddies', S], ['taborder', 'Edit Tab Order', S],
  'grip', ['hl', 'Lay Out Horizontally', M], ['vl', 'Lay Out Vertically', M], ['hsplit', 'Horizontal Splitter', M], ['vsplit', 'Vertical Splitter', M],
  ['grid', 'Lay Out in a Grid', M], ['form', 'Lay Out in a Form', M], ['break', 'Break Layout', S], ['adjust', 'Adjust Size', S]
].map((t, i) => t === 'grip'
  ? `<svg class="w-[5px] h-[18px] mr-[3px] ${i ? 'ml-[8px]' : ''}" viewBox="0 0 5 18"><path d="M1 0v18M4 0v18" stroke="#bcb8b3" stroke-dasharray="1 2"/></svg>`
  : `<button aria-label="${t[1]}" class="w-[33px] h-[31px] shrink-0 grid place-items-center ${t[3] ? 'rounded-[3px] border border-[#a6a29d] bg-[#dcd8d4]' : ''}"><svg class="${t[2]}"><use href="#i-${t[0]}"/></svg></button>`
).join('');

// widget box categories
byId('widgets').innerHTML = [
  ['Layouts', 'vl Vertical Layout', 'hl Horizontal Layout', 'grid Grid Layout', 'form Form Layout'],
  ['Spacers', 'hsp Horizontal Spacer', 'vsp Vertical Spacer'],
  ['Buttons', 'push Push Button', 'tool Tool Button', 'radio Radio Button', 'check Check Box', 'cmd Command Link Button', 'dlg Dialog Button Box'],
  ['Item Views (Model-Based)', 'list List View', 'tree Tree View', 'table Table View', 'col Column View'],
  ['Item Widgets (Item-Based)', 'list List Widget', 'tree Tree Widget', 'table Table Widget'],
  ['Containers', 'group Group Box', 'scroll Scroll Area', 'toolbox Tool Box', 'tab Tab Widget', 'stack Stacked Widget', 'frame Frame', 'frame Widget', 'mdi MDI Area', 'dock Dock Widget'],
  ['Input Widgets']
].map(([head, ...items], i) => `
  <button class="w-full h-[18px] flex items-center pl-[4px] border-b border-[#a19e9a] bg-linear-to-b from-[#f1efed] to-[#e2dfdb] whitespace-nowrap ${i ? 'border-t' : ''}"><svg class="w-[9px] h-[6px] shrink-0"><use href="#i-down"/></svg><span class="flex-1 text-center">${head}</span></button>
  <ul>${items.map(t => { const n = t.indexOf(' '); return `<li class="h-[24px] flex items-center gap-[6px] pl-[4px]"><svg class="w-[21px] h-[22px]"><use href="#i-${t.slice(0, n)}"/></svg><span>${t.slice(n + 1)}</span></li>`; }).join('')}</ul>`
).join('');

// properties: marks before the name: '+' collapsed, '-' expanded, '*' changed, '>' nested, '#' class heading
const OFF = '<input type="checkbox" aria-label="on" class="block appearance-none w-[14px] h-[14px] border border-[#bbb] bg-white">';
const ON = '<span class="relative block w-[14px] h-[14px]"><input type="checkbox" checked aria-label="enabled" class="block appearance-none w-[14px] h-[14px] border border-[#aaa] bg-white"><svg class="absolute left-[3px] top-[2px] w-[9px] h-[10px]" viewBox="0 0 9 10"><path d="M1 5l2 3.500L7.500 1" fill="none" stroke="#000" stroke-width="2"/></svg></span>';
const props = [
  ['#-QObject'], ['*objectName', 'MainWindow'], ['#-QWidget'],
  ['enabled', ON], ['-*geometry', '[(0, 0), 1800 x 899]'], ['>X', '0', 'dim'], ['>Y', '0', 'dim'], ['>Width', '1800'], ['>Height', '899'],
  ['+sizePolicy', '[Preferred, Preferred]'], ['+minimumSize', '0 x 0'], ['+*maximumSize', '1800 x 900'], ['+sizeIncrement', '0 x 0'], ['+baseSize', '0 x 0'],
  ['*palette', 'Customized'], ['+font', '<span class="flex items-center"><svg class="w-[10px] h-[11px] shrink-0 ml-[2px] mr-[10px]" viewBox="0 0 10 11"><path d="M0 10.500h2.500M6.500 10.500H10M1.200 10.500L5 1l3.500 9.500M2.500 7h5" fill="none" stroke="#111"/></svg>[Piboto Light]</span>', 'h-[20px]'],
  ['cursor', '<span class="flex items-center"><svg class="w-[9px] h-[14px] shrink-0 ml-[4px] mr-[11px]" viewBox="0 0 9 14"><path d="M1 1v10l2.500-2L5 13l1.800-.8L5 8.500h3z" fill="#fff" stroke="#333" stroke-width=".8"/></svg>Arrow</span>', 'h-[22px]'],
  ['mouseTracking', OFF], ['focusPolicy', 'NoFocus'], ['contextMenuPolicy', 'DefaultContextMenu'], ['acceptDrops', OFF], ['+*windowTitle', 'MainWindow'],
  ['+windowIcon', '<svg class="w-[13px] h-[12px] ml-[2px]"><use href="#i-qt"/></svg>', 'h-[20px]'], ['windowOpacity', '1.000000'], ['+toolTip', ''], ['toolTipDuration', '-1'],
  ['+statusTip', ''], ['+whatsThis', ''], ['+accessibleName', ''], ['+accessibleDescription', ''], ['layoutDirection', 'LeftToRight'],
  ['*autoFillBackground', OFF], ['*styleSheet', 'background-color'], ['+locale', 'English, Canada'], ['+windowFilePath', ''], ['+inputMethodHints', 'ImhNone'], ['windowModality', 'NonModal']
];
byId('props').innerHTML = props.map(([key, value, extra], i) => {
  const name = key.replace(/^[#+\-*>]+/, ''), has = c => key.slice(0, key.length - name.length).includes(c);
  const arrow = has('-') ? '<svg class="w-[9px] h-[6px]"><use href="#i-down"/></svg>' : has('+') ? '<svg class="w-[6px] h-[9px] ml-px"><use href="#i-right"/></svg>' : '';
  const cell = `<div class="flex items-center"><span class="w-[17px] shrink-0">${arrow}</span><span class="${has('>') ? 'pl-[20px]' : ''}">${name}</span></div>`;
  const height = extra && extra !== 'dim' ? extra : 'h-[19px]';
  if (has('#')) return `<tr class="${height} bg-[#9e9c98] text-white font-bold"><td colspan="2" class="pl-[6px] border-b border-[#bdbbb8]">${cell}</td></tr>`;
  const tone = name === 'objectName' ? 'bg-[#fff0df]' : i % 2 ? 'bg-[#ffffde]' : 'bg-[#ffffbf]';
  return `<tr class="${height} ${tone} ${extra === 'dim' ? 'text-[#c9c9b4]' : ''}"><td class="pl-[6px] border-r border-b border-[#c3c2be] ${has('*') ? 'font-bold' : ''}">${cell}</td><td class="pl-[3px] border-b border-[#c3c2be] overflow-hidden">${value}</td></tr>`;
}).join('');

// form canvas: pump page, splitter, pump page
['a', 'b'].forEach((id, i) => {
  const page = byId('pump').content.cloneNode(true);
  page.querySelector('h3').textContent = i ? 'Pump B' : 'Pump A';
  page.querySelectorAll('[data-for]').forEach(l => { l.htmlFor = l.dataset.for + '-' + id; });
  page.querySelectorAll('[data-spin]').forEach(s => {
    s.classList.add('block');
    s.innerHTML = `<span class="flex w-[200px] h-[78px] rounded-[4px] border border-[#b3b3b3] bg-white overflow-hidden"><input id="${s.dataset.spin}-${id}" value="0.00" disabled class="flex-1 min-w-0 pl-[4px] pt-[8px] text-[60px] leading-[68px] font-bold text-[#bebebe]"><span class="w-[14px] border-l border-[#b3b3b3] bg-linear-to-b from-white to-[#f6f6f6] pt-[18px] pl-[3px]"><svg class="w-[7px] h-[4px] block" viewBox="0 0 8 5"><path d="M0 5l4-5 4 5z" fill="#dcdcdc"/></svg></span></span>`;
  });
  byId('canvas').append(page);
  if (!i) byId('canvas').insertAdjacentHTML('beforeend', '<div class="ml-[20px] w-[20px] shrink-0 self-stretch bg-[#4c6b8c] pl-[10px] pt-[10px]"><div class="h-full bg-[#82b5ee] border-l border-[#a3b4c4]"></div></div>');
});
</script>
</body>
</html>
